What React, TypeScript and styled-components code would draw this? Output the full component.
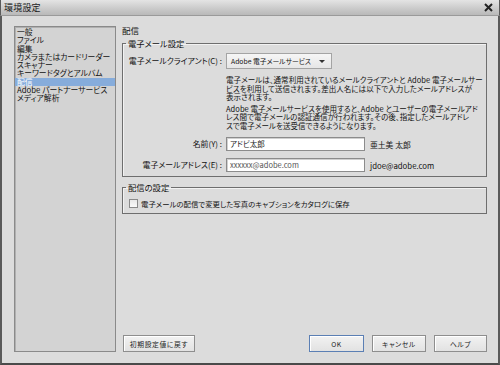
import React from "react";
import styled, { createGlobalStyle } from "styled-components";

const Global = createGlobalStyle`
  html, body { margin: 0; padding: 0; background: #dcdcdc; }
  * { box-sizing: border-box; }
  body {
    font-family: "Noto Sans CJK JP", "Noto Sans", sans-serif;
    font-feature-settings: "palt";
    color: #111;
  }
`;

const Window = styled.div`
  width: 500px;
  height: 365px;
  display: flex;
  flex-direction: column;
  background: #dcdcdc;
  border-left: 2px solid #5a5a5a;
  border-right: 2px solid #5a5a5a;
  border-bottom: 2px solid #4a4a4a;
`;

const TitleBar = styled.div`
  height: 16px;
  flex: none;
  display: flex;
  align-items: center;
  justify-content: space-between;
  padding: 0 6px 0 3px;
  background: linear-gradient(#e4e4e4, #c9c9c9 60%, #b9b9b9);
  border-bottom: 1px solid #9a9a9a;
  margin: 0 -2px;
  border-left: 1px solid #5a5a5a;
  border-right: 1px solid #5a5a5a;
`;

const Title = styled.span`
  font-size: 9px;
  line-height: 10px;
  color: #1a1a1a;
  letter-spacing: 0.2px;
`;

const Body = styled.div`
  flex: 1;
  display: flex;
  gap: 6px;
  padding: 10px 11px 11px 12px;
`;

const List = styled.ul`
  list-style: none;
  margin: 0;
  padding: 1px 0 0 0;
  width: 102px;
  flex: none;
  background: #d3d3d3;
  border: 1px solid #8a8a8a;
  box-shadow: inset 1px 1px 0 #b0b0b0;
`;

const Item = styled.li<{ $selected?: boolean }>`
  height: 8.25px;
  line-height: 8.25px;
  font-size: 7.8px;
  padding-left: 2px;
  white-space: nowrap;
  color: ${(p) => (p.$selected ? "#fff" : "#111")};
  background: ${(p) => (p.$selected ? "#86acdb" : "transparent")};
`;

const Main = styled.div`
  flex: 1;
  display: flex;
  flex-direction: column;
`;

const Heading = styled.div`
  height: 12px;
  line-height: 8px;
  font-size: 8.5px;
`;

const Group = styled.fieldset<{ $mt: number; $pb: number }>`
  margin: ${(p) => p.$mt}px 0 0 0;
  padding: 0 0 ${(p) => p.$pb}px 0;
  min-inline-size: 0;
  border: 1px solid #6e6e6e;
  box-shadow: inset 1px 1px 0 #f2f2f2;
`;

const Legend = styled.legend`
  font-size: 8.3px;
  line-height: 10px;
  height: 10px;
  padding: 0 2px;
  margin-left: 3px;
`;

const FormGrid = styled.div`
  display: grid;
  grid-template-columns: 99px 1fr;
  column-gap: 4px;
  align-items: center;
`;

const LabelCell = styled.label<{ $mt: number }>`
  margin-top: ${(p) => p.$mt}px;
  font-size: 7.9px;
  text-align: right;
  white-space: nowrap;
  line-height: 10px;
`;

const Cell = styled.div<{ $mt: number }>`
  margin-top: ${(p) => p.$mt}px;
  display: flex;
  align-items: center;
  gap: 5px;
`;

const Select = styled.div`
  width: 106px;
  height: 16px;
  display: flex;
  align-items: center;
  justify-content: space-between;
  padding: 0 6px 0 4px;
  background: linear-gradient(#f6f6f6, #e6e6e6);
  border: 1px solid #a4a4a4;
  font-size: 6.8px;
  white-space: nowrap;
`;

const Arrow = styled.span`
  width: 0;
  height: 0;
  border-left: 3px solid transparent;
  border-right: 3px solid transparent;
  border-top: 3.5px solid #333;
`;

const Para = styled.p<{ $mt: number }>`
  grid-column: 2;
  margin: ${(p) => p.$mt}px 0 0 0;
  font-size: 7.5px;
  line-height: 8.5px;
  white-space: nowrap;
  letter-spacing: 0.05px;
`;

const Input = styled.div<{ $muted?: boolean }>`
  width: 139px;
  height: 14px;
  background: #fff;
  border: 1px solid #8c8c8c;
  box-shadow: inset 1px 1px 0 #d0d0d0;
  font-size: 7.5px;
  line-height: 12px;
  padding-left: 3px;
  color: ${(p) => (p.$muted ? "#555" : "#222")};
  white-space: nowrap;
`;

const Side = styled.span`
  font-size: 7.8px;
  white-space: nowrap;
`;

const CheckRow = styled.label`
  margin: 6px 0 0 6px;
  height: 10px;
  display: flex;
  align-items: center;
  gap: 3px;
  font-size: 7.4px;
  white-space: nowrap;
`;

const Box = styled.span`
  width: 9px;
  height: 9px;
  background: linear-gradient(#e8e8e8, #fafafa);
  border: 1px solid #8a8a8a;
`;

const Buttons = styled.div`
  margin-top: auto;
  display: flex;
  gap: 8px;
  padding-left: 1px;
`;

const Button = styled.button<{ $w: number; $primary?: boolean }>`
  width: ${(p) => p.$w}px;
  height: 17px;
  padding: 0;
  font-family: inherit;
  font-feature-settings: "palt";
  font-size: 6.8px;
  letter-spacing: 0.6px;
  color: #222;
  background: linear-gradient(#f2f2f2, #e2e2e2);
  border: 1px solid ${(p) => (p.$primary ? "#5b7fb4" : "#8e8e8e")};
  box-shadow: inset 1px 1px 0 #fff;
`;

const Spacer = styled.div`
  flex: 1;
`;

const items = [
  "一般",
  "ファイル",
  "編集",
  "カメラまたはカードリーダー",
  "スキャナー",
  "キーワードタグとアルバム",
  "配信",
  "Adobe パートナーサービス",
  "メディア解析",
];

export default function App() {
  return (
    <>
      <Global />
      <Window>
        <TitleBar>
          <Title>環境設定</Title>
          <svg width="9" height="9" viewBox="0 0 9 9">
            <path d="M1 1 L8 8 M8 1 L1 8" stroke="#222" strokeWidth="2" />
          </svg>
        </TitleBar>
        <Body>
          <List>
            {items.map((t) => (
              <Item key={t} $selected={t === "配信"}>
                {t}
              </Item>
            ))}
          </List>
          <Main>
            <Heading>配信</Heading>
            <Group $mt={0} $pb={4}>
              <Legend>電子メール設定</Legend>
              <FormGrid>
                <LabelCell $mt={5}>電子メールクライアント(C) :</LabelCell>
                <Cell $mt={5}>
                  <Select>
                    <span>Adobe 電子メールサービス</span>
                    <Arrow />
                  </Select>
                </Cell>
                <Para $mt={7}>
                  電子メールは、通常利用されているメールクライアントと Adobe 電子メールサー
                  <br />
                  ビスを利用して送信されます。差出人名には以下で入力したメールアドレスが
                  <br />
                  表示されます。
                </Para>
                <Para $mt={3}>
                  Adobe 電子メールサービスを使用すると、Adobe とユーザーの電子メールアド
                  <br />
                  レス間で電子メールの認証通信が行われます。その後、指定したメールアドレ
                  <br />
                  スで電子メールを送受信できるようになります。
                </Para>
                <LabelCell $mt={7}>名前(Y) :</LabelCell>
                <Cell $mt={7}>
                  <Input>アドビ太郎</Input>
                  <Side>亜土美 太郎</Side>
                </Cell>
                <LabelCell $mt={7}>電子メールアドレス(E) :</LabelCell>
                <Cell $mt={7}>
                  <Input $muted>xxxxxx@adobe.com</Input>
                  <Side>jdoe@adobe.com</Side>
                </Cell>
              </FormGrid>
            </Group>
            <Group $mt={5} $pb={5}>
              <Legend>配信の設定</Legend>
              <CheckRow>
                <Box />
                電子メールの配信で変更した写真のキャプションをカタログに保存
              </CheckRow>
            </Group>
            <Buttons>
              <Button $w={72}>初期設定値に戻す</Button>
              <Spacer />
              <Button $w={55} $primary>OK</Button>
              <Button $w={54}>キャンセル</Button>
              <Button $w={53}>ヘルプ</Button>
            </Buttons>
          </Main>
        </Body>
      </Window>
    </>
  );
}
